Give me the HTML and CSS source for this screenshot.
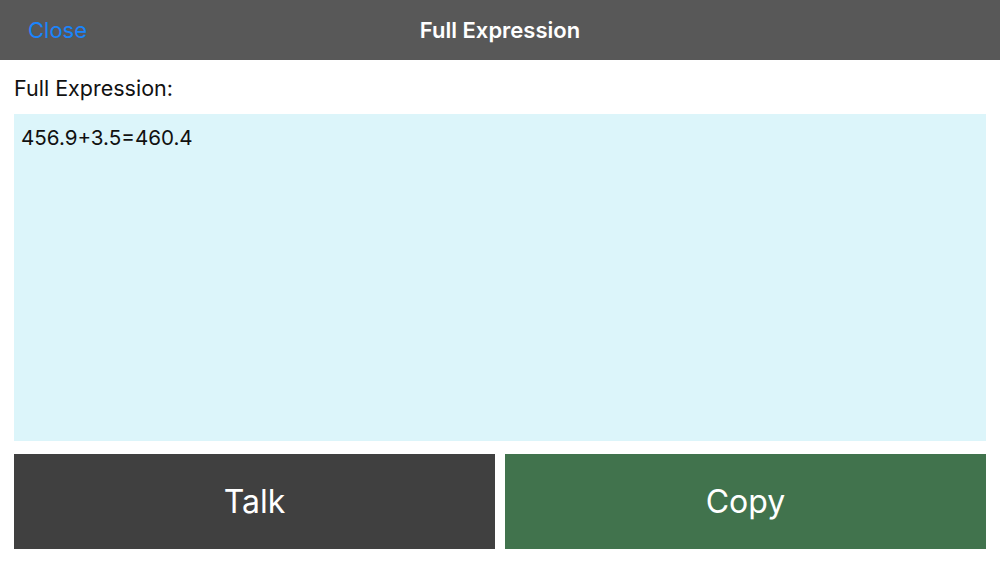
FILE: index.html
```html
<!DOCTYPE html>
<html lang="en">
<head>
  <meta charset="UTF-8" />
  <meta name="viewport" content="width=device-width, initial-scale=1.0" />
  <title>Full Expression</title>
  <link rel="stylesheet" href="styles.css">
</head>
<body>
  <div class="header">
    <button class="close-btn">Close</button>
    <h1>Full Expression</h1>
    <span></span>
  </div>

  <div class="container">
    <div class="label">Full Expression:</div>
    <div class="expression">456.9+3.5=460.4</div>
    <div class="buttons">
      <button class="action talk">Talk</button>
      <button class="action copy">Copy</button>
    </div>
  </div>
</body>
</html>
```

FILE: styles.css
```css
:root {
  --header-bg: #585858;
  --link-color: #1a84fc;
  --expr-bg: #dcf5fa;
  --talk-bg: #404040;
  --copy-bg: #41734d;
}

body {
  font-family: Inter, "Liberation Sans", sans-serif;
  margin: 0;
  padding: 0;
  background-color: #fff;
  color: #111;
}

.header {
  display: grid;
  grid-template-columns: 1fr auto 1fr;
  align-items: center;
  height: 60px;
  padding: 0 28px;
  background-color: var(--header-bg);
  box-sizing: border-box;
}

.close-btn {
  justify-self: start;
  background: none;
  border: none;
  padding: 0;
  font-family: inherit;
  font-size: 22px;
  color: var(--link-color);
  cursor: pointer;
}

h1 {
  margin: 0;
  font-size: 22px;
  font-weight: 600;
  color: #fff;
}

.container {
  padding: 0 14px;
}

.label {
  display: flex;
  align-items: center;
  height: 54px;
  padding-top: 2px;
  box-sizing: border-box;
  font-size: 21.5px;
}

.expression {
  height: 327px;
  padding: 11px 7px;
  box-sizing: border-box;
  background-color: var(--expr-bg);
  font-size: 20.6px;
  line-height: 26px;
}

.buttons {
  display: flex;
  gap: 10px;
  margin-top: 13px;
}

.action {
  flex: 1;
  height: 95px;
  border: none;
  font-family: inherit;
  font-size: 32px;
  color: #fff;
  cursor: pointer;
}

.talk {
  background-color: var(--talk-bg);
}

.copy {
  background-color: var(--copy-bg);
}
```
